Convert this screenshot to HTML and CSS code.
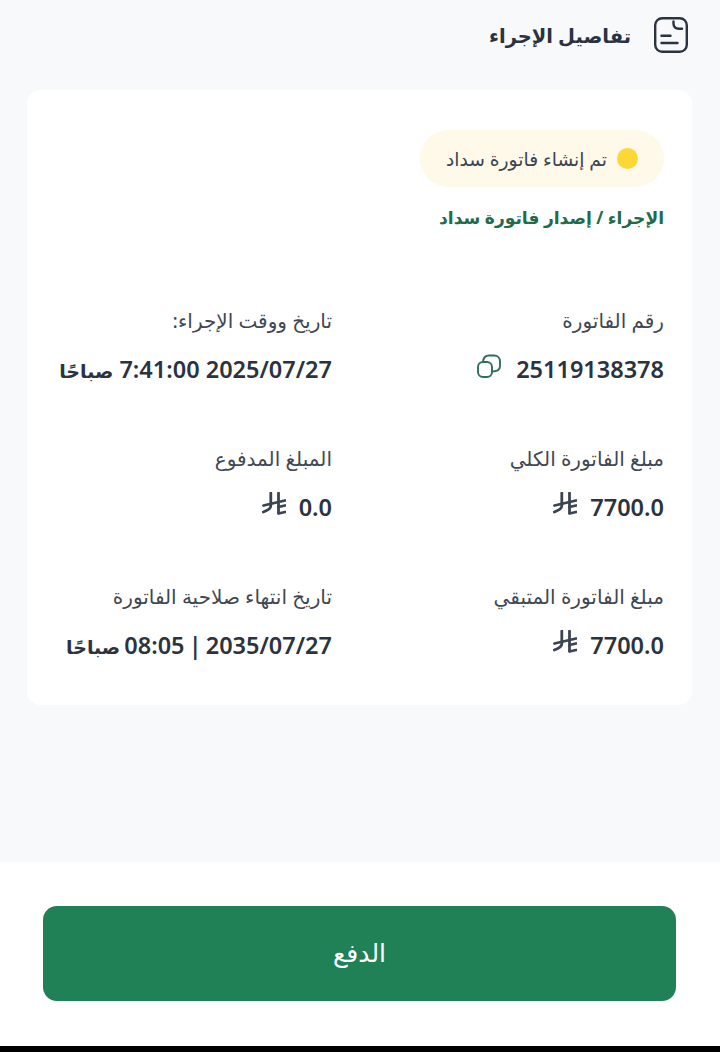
FILE: index.html
```html
<!DOCTYPE html>
<html lang="ar" dir="rtl">
<head>
  <meta charset="UTF-8" />
  <meta name="viewport" content="width=device-width, initial-scale=1.0"/>
  <title>تفاصيل الإجراء</title>
  <link rel="stylesheet" href="styles.css">
</head>
<body>
  <svg class="sprite">
    <symbol id="riyal" viewBox="0 0 24 24">
      <path d="M8.800 1v13c0 2.500-3.500 4.500-7.500 6" />
      <path d="M16.500 1v19.500" />
      <path d="M1.500 13.500L23 8.500" />
      <path d="M16.500 15L23 13.500" />
      <path d="M16.500 21.500L23 20" />
    </symbol>
  </svg>

  <div class="page">
    <main class="content">
      <header class="page-title">
        <svg class="title-icon" viewBox="0 0 34 36" fill="none" stroke="#2b3340" stroke-width="2.400" stroke-linecap="round">
          <rect x="1.200" y="1.200" width="31.600" height="33.600" rx="7" />
          <path d="M19.500 4.500v2c0 3 2 5.200 5.500 5.200h3" />
          <path d="M7.500 18.700h9M7.500 26h16" />
        </svg>
        <h1>تفاصيل الإجراء</h1>
      </header>

      <section class="card">
        <div class="status">
          <span class="status-dot"></span>
          <span>تم إنشاء فاتورة سداد</span>
        </div>
        <h2 class="action">الإجراء / إصدار فاتورة سداد</h2>

        <div class="details">
          <div class="item">
            <div class="label">رقم الفاتورة</div>
            <div class="value">
              <span dir="ltr">25119138378</span>
              <svg class="copy-icon" viewBox="0 0 24 24" fill="none" stroke="#2f6f5a" stroke-width="1.900">
                <rect x="1" y="8" width="14" height="15" rx="5" />
                <path d="M6 8c.3-4 2.500-6.500 6-6.500h5c3.500 0 6 2.500 6 6V12c0 3.500-2.500 5.500-8 5.500" />
              </svg>
            </div>
          </div>
          <div class="item">
            <div class="label">تاريخ ووقت الإجراء:</div>
            <div class="value"><span>2025/07/27 7:41:00 <span class="period">صباحًا</span></span></div>
          </div>

          <div class="item">
            <div class="label">مبلغ الفاتورة الكلي</div>
            <div class="value">
              <span dir="ltr">7700.0</span>
              <svg class="riyal"><use href="#riyal" /></svg>
            </div>
          </div>
          <div class="item">
            <div class="label">المبلغ المدفوع</div>
            <div class="value">
              <span dir="ltr">0.0</span>
              <svg class="riyal"><use href="#riyal" /></svg>
            </div>
          </div>

          <div class="item">
            <div class="label">مبلغ الفاتورة المتبقي</div>
            <div class="value">
              <span dir="ltr">7700.0</span>
              <svg class="riyal"><use href="#riyal" /></svg>
            </div>
          </div>
          <div class="item">
            <div class="label">تاريخ انتهاء صلاحية الفاتورة</div>
            <div class="value"><span class="tight">2035/07/27 | 08:05 <span class="period">صباحًا</span></span></div>
          </div>
        </div>
      </section>
    </main>

    <footer class="footer">
      <button class="pay-btn">الدفع</button>
    </footer>
  </div>
</body>
</html>
```

FILE: styles.css
```css
* {
  box-sizing: border-box;
  font-family: 'Noto Sans', 'DejaVu Sans', sans-serif;
}

body {
  margin: 0;
  background-color: #000;
}

.sprite {
  display: none;
}

.page {
  height: 1046px;
  display: flex;
  flex-direction: column;
  background-color: #f8f9fb;
}

.content {
  flex: 1;
  padding: 0 28px 0 27px;
}

.page-title {
  height: 90px;
  padding: 0 4px 20px 0;
  display: flex;
  align-items: center;
  gap: 23px;
}

.title-icon {
  width: 34px;
  height: 36px;
}

.page-title h1 {
  margin: 0;
  font-size: 19.500px;
  font-weight: 700;
  color: #2b3340;
}

.card {
  height: 615px;
  background-color: #fff;
  border-radius: 14px;
  padding: 40px 28px 0 0;
}

.status {
  display: inline-flex;
  align-items: center;
  gap: 10px;
  height: 57px;
  padding: 0 26px;
  border-radius: 29px;
  background-color: #fef9e8;
  font-size: 18.700px;
  color: #3a4452;
}

.status-dot {
  width: 21px;
  height: 21px;
  border-radius: 50%;
  background-color: #fdd835;
}

.action {
  margin: 15px 0 0;
  font-size: 17.100px;
  line-height: 32px;
  font-weight: 700;
  color: #1f6b4c;
}

.details {
  margin-top: 72px;
  display: grid;
  grid-template-columns: 332px 1fr;
  grid-auto-rows: 138px;
}

.label {
  font-size: 20px;
  line-height: 30px;
  color: #3f4854;
}

.value {
  margin-top: 17px;
  display: flex;
  align-items: center;
  font-size: 23.500px;
  line-height: 32px;
  font-weight: 600;
  color: #2b3340;
}

.period {
  font-size: 19px;
}

.tight {
  word-spacing: -2px;
}

.copy-icon {
  width: 24px;
  height: 24px;
  margin: -6px 15px 0 0;
}

.riyal {
  width: 24px;
  height: 24px;
  margin: -7px 13px 0 0;
  fill: none;
  stroke: #3a4452;
  stroke-width: 2.800;
  stroke-linecap: round;
}

.footer {
  height: 184px;
  padding: 44px 44px 0 43px;
  background-color: #fff;
}

.pay-btn {
  width: 100%;
  height: 95px;
  padding-bottom: 4px;
  border: none;
  border-radius: 14px;
  background-color: #1f8155;
  color: #fff;
  font-size: 25px;
  cursor: pointer;
}
```
